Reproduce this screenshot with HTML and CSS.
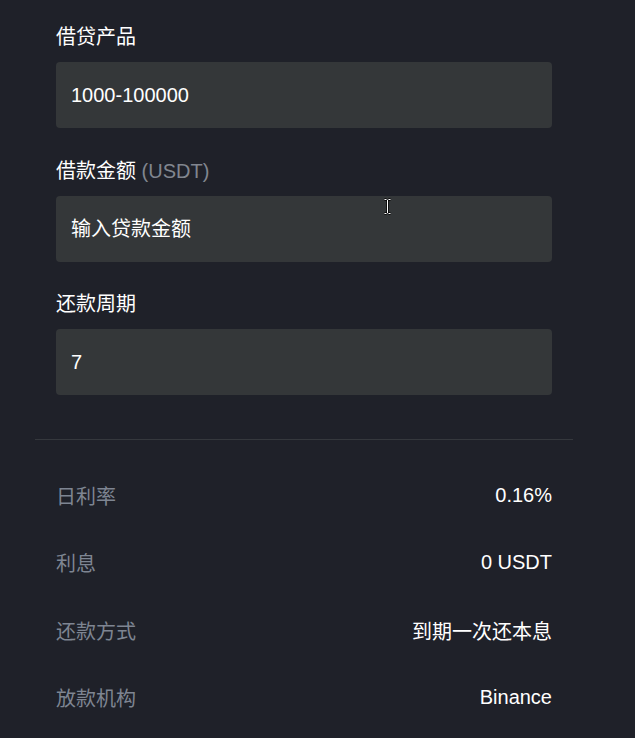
FILE: index.html
```html
<!DOCTYPE html>
<html lang="zh-CN">
<head>
<meta charset="utf-8">
<title>借贷</title>
<link rel="stylesheet" href="styles.css">
</head>
<body>
<div class="panel">
  <div class="form">
    <div class="group">
      <div class="label">借贷产品</div>
      <div class="field">1000-100000</div>
    </div>
    <div class="group">
      <div class="label">借款金额 <span class="unit">(USDT)</span></div>
      <div class="field">输入贷款金额</div>
    </div>
    <div class="group">
      <div class="label">还款周期</div>
      <div class="field">7</div>
    </div>
  </div>
  <div class="divider"></div>
  <div class="list">
    <div class="row"><span class="key">日利率</span><span class="val">0.16%</span></div>
    <div class="row"><span class="key">利息</span><span class="val">0 USDT</span></div>
    <div class="row"><span class="key">还款方式</span><span class="val">到期一次还本息</span></div>
    <div class="row"><span class="key">放款机构</span><span class="val">Binance</span></div>
  </div>
</div>
<svg class="cursor" width="9" height="17" viewBox="0 0 9 17"><path d="M1.5 1.5h2M5.5 1.5h2M4.5 2v13M1.5 15.5h2M5.5 15.5h2" stroke="#000" stroke-width="2.4" fill="none"/><path d="M1.5 1.5h2M5.5 1.5h2M4.5 2v13M1.5 15.5h2M5.5 15.5h2" stroke="#fff" stroke-width="1" fill="none"/></svg>
</body>
</html>
```
FILE: styles.css
```css
html, body {
  margin: 0;
  padding: 0;
  background: #1f2129;
}
body {
  font-family: "Liberation Sans", "Noto Sans CJK SC", sans-serif;
  font-size: 20px;
  color: #ffffff;
  position: relative;
  height: 738px;
  overflow: hidden;
}
.panel {
  width: 538px;
  margin-left: 35px;
  padding-top: 25px;
}
.form {
  padding: 0 21px;
  display: flex;
  flex-direction: column;
  gap: 30.5px;
}
.group {
  display: flex;
  flex-direction: column;
  gap: 13px;
}
.label {
  line-height: 24px;
  height: 24px;
}
.unit {
  color: #81868f;
}
.field {
  height: 66px;
  background: #343739;
  border-radius: 4px;
  padding: 0 15px;
  display: flex;
  align-items: center;
  line-height: 24px;
}
.divider {
  margin-top: 44px;
  height: 1px;
  background: #35383d;
}
.list {
  padding: 22px 21px 0;
}
.row {
  height: 67.3px;
  display: flex;
  justify-content: space-between;
  align-items: center;
}
.key {
  color: #7e8592;
}
.val {
  color: #ffffff;
}
.cursor {
  position: absolute;
  left: 383px;
  top: 198px;
}
```
